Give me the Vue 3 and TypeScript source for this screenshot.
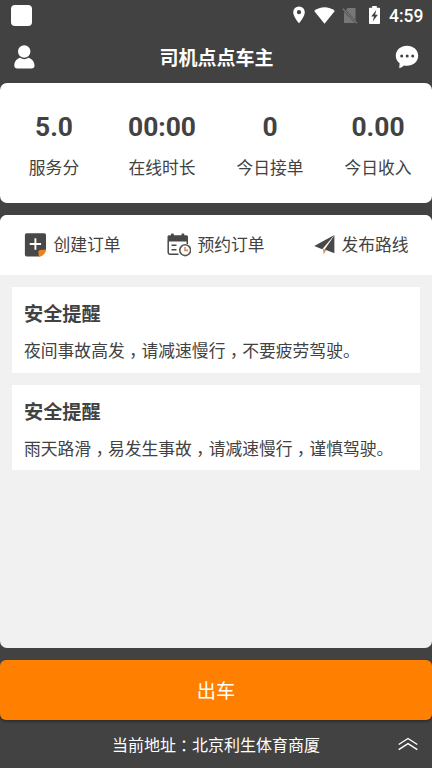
<script setup lang="ts">
interface Stat {
  value: string
  label: string
}

interface Notice {
  title: string
  parts: string[]
}

const stats: Stat[] = [
  { value: '5.0', label: '服务分' },
  { value: '00:00', label: '在线时长' },
  { value: '0', label: '今日接单' },
  { value: '0.00', label: '今日收入' },
]

const notices: Notice[] = [
  { title: '安全提醒', parts: ['夜间事故高发', '请减速慢行', '不要疲劳驾驶。'] },
  { title: '安全提醒', parts: ['雨天路滑', '易发生事故', '请减速慢行', '谨慎驾驶。'] },
]
</script>

<template>
  <div class="screen">
    <div class="status">
      <span class="app-dot"></span>
      <div class="status-right">
        <svg class="pin" viewBox="0 0 12 18" width="12" height="18">
          <path fill="#fff" fill-rule="evenodd" d="M6 .4A5.800 5.800 0 0 0 .2 6.200C.2 10.500 6 17.300 6 17.300S11.800 10.500 11.800 6.200A5.800 5.800 0 0 0 6 .4ZM6 4.100a2.100 2.100 0 1 1 0 4.200a2.100 2.100 0 0 1 0-4.200Z" />
        </svg>
        <svg class="wifi" viewBox="0 0 21 17" width="21" height="17">
          <path fill="#fff" d="M.2 4.100C6-.9 15-.9 20.800 4.100L10.500 16.800Z" />
        </svg>
        <svg class="sim" viewBox="0 0 16 17" width="16" height="17">
          <path fill="#777" d="M5.500 1H13.500V13.200L3.900 3.200ZM2 4.800L13 16H2Z" />
          <path stroke="#777" stroke-width="1.300" fill="none" d="M.8 1.800L15 16.200" />
        </svg>
        <svg class="battery" viewBox="0 0 11 18" width="11" height="18">
          <path fill="#fff" d="M3.200 0H7.800V1.800H10.200Q11 1.800 11 2.600V17.200Q11 18 10.200 18H.8Q0 18 0 17.200V2.600Q0 1.800 .8 1.800H3.200Z" />
          <path fill="#424242" d="M7.300 4L2.200 10.500H5L3.700 15.500L8.900 8.700H6.100Z" />
        </svg>
        <span class="clock">4:59</span>
      </div>
    </div>

    <header class="header">
      <svg viewBox="0 0 22 24" width="22" height="24">
        <circle cx="10.200" cy="6.500" r="6.200" fill="#fff" />
        <path fill="#fff" d="M6 12.700Q10.200 15.600 14.500 12.700C18.200 13.600 20.500 17.200 20.500 20.500Q20.500 23.500 17.500 23.500H3.300Q.3 23.500 .3 20.500C.3 17.200 2.400 13.600 6 12.700Z" />
      </svg>
      <h1>司机点点车主</h1>
      <svg viewBox="0 0 24 24" width="24" height="24">
        <path fill="#fff" d="M12 .7C18.300 .7 23.200 5 23.200 10.700S18.300 20.700 12 20.700Q10.400 20.700 9 20.400Q6.700 22.700 4.300 23.200L4.600 18.200C2.200 16.300 .8 13.700 .8 10.700C.8 5 5.700 .7 12 .7Z" />
        <g fill="#424242">
          <circle cx="6.700" cy="10.900" r="1.500" />
          <circle cx="12.200" cy="10.900" r="1.500" />
          <circle cx="17.700" cy="10.900" r="1.500" />
        </g>
      </svg>
    </header>

    <section class="stats">
      <div v-for="stat in stats" :key="stat.label" class="stat">
        <strong>{{ stat.value }}</strong>
        <span>{{ stat.label }}</span>
      </div>
    </section>

    <main class="panel">
      <nav class="actions">
        <button class="action">
          <svg viewBox="0 0 24 24" width="24" height="24">
            <path fill="#484848" d="M3.700 .3H21.200Q23 .3 23 2.100V17L16.500 23.500H3.700Q1.900 23.500 1.900 21.700V2.100Q1.900 .3 3.700 .3Z" />
            <path fill="none" stroke="#fff" stroke-width="1.900" d="M12.400 5.300V16.700M6.700 11H18.100" />
            <path fill="#e9821f" d="M23 16.600C22.900 20.200 20.200 23.300 15.900 23.700L15.300 18.700Q15.500 17 17.300 17Z" />
          </svg>
          <span>创建订单</span>
        </button>
        <button class="action">
          <svg viewBox="0 0 24 24" width="24" height="24">
            <path fill="#484848" d="M2 2.300H4V1.200Q4 .4 4.800 .4H6Q6.800 .4 6.800 1.200V2.300H14.500V1.200Q14.500 .4 15.300 .4H16.500Q17.300 .4 17.300 1.200V2.300H19.500Q21 2.300 21 3.800V8.500H.5V3.800Q.5 2.300 2 2.300Z" />
            <path fill="none" stroke="#484848" stroke-width="1.500" d="M1.200 8V19.500Q1.200 21.200 2.900 21.200H11.500M20.300 8V11" />
            <path stroke="#484848" stroke-width="1.600" d="M4.500 12.200H9.500M4.500 16.700H9.500" />
            <circle cx="18.200" cy="17.200" r="5.400" fill="#fff" stroke="#555" stroke-width="1.600" />
            <path fill="none" stroke="#e08a50" stroke-width="1.600" d="M18 13.900V17.400H21" />
          </svg>
          <span>预约订单</span>
        </button>
        <button class="action">
          <svg viewBox="0 0 24 24" width="24" height="24">
            <path fill="#484848" d="M23.400 2L3.200 12.900L11.200 16.200Z" />
            <path fill="#484848" d="M23.400 2.300L13.700 16.600L23.400 20.300Z" />
            <path fill="#e9924d" d="M11.900 15.500L15.200 17.300L12.600 21.400Z" />
          </svg>
          <span>发布路线</span>
        </button>
      </nav>

      <div class="notices">
        <article v-for="(notice, n) in notices" :key="n" class="notice">
          <h2>{{ notice.title }}</h2>
          <p><template v-for="(part, i) in notice.parts" :key="i"><span v-if="i > 0" class="mark comma">，</span>{{ part }}</template></p>
        </article>
      </div>
    </main>

    <button class="go">出车</button>

    <footer class="address">
      <p>当前地址<span class="mark colon">：</span>北京利生体育商厦</p>
      <svg viewBox="0 0 20 14" width="20" height="14">
        <path fill="none" stroke="#fff" stroke-width="1.400" d="M.7 7.500L10 1.500L19.300 7.500M.7 12.700L10 6.700L19.300 12.700" />
      </svg>
    </footer>
  </div>
</template>

<style>
body {
  margin: 0;
  background: #424242;
}
</style>

<style scoped>
.screen {
  display: flex;
  flex-direction: column;
  width: 432px;
  height: 768px;
  overflow: hidden;
  background: #424242;
  color: #424242;
  font-family: Roboto, 'Noto Sans CJK SC', sans-serif;
}

h1,
h2,
p {
  margin: 0;
}

button {
  margin: 0;
  padding: 0;
  border: 0;
  font: inherit;
  color: inherit;
}

svg {
  display: block;
  flex: none;
}

.status {
  display: flex;
  justify-content: space-between;
  align-items: center;
  box-sizing: border-box;
  height: 30px;
  padding: 0 9px 0 11px;
}

.app-dot {
  width: 21px;
  height: 21px;
  border-radius: 4px;
  background: #fff;
}

.status-right {
  display: flex;
  align-items: center;
}

.wifi {
  margin-left: 9px;
}

.sim {
  margin-left: 7px;
}

.battery {
  margin-left: 11px;
}

.clock {
  width: 34px;
  margin-left: 9px;
  padding-top: 2px;
  color: #fff;
  font-size: 17.5px;
  font-weight: 500;
  line-height: 20px;
}

.header {
  display: flex;
  align-items: center;
  justify-content: space-between;
  box-sizing: border-box;
  height: 53px;
  padding: 0 13px 0 14px;
  color: #fff;
}

.header h1 {
  padding: 4px 0 0 2px;
  font-size: 19px;
  font-weight: 700;
  line-height: 28px;
}

.stats {
  display: grid;
  grid-template-columns: repeat(4, 1fr);
  box-sizing: border-box;
  height: 120px;
  padding-top: 28px;
  border-radius: 7px;
  background: #fff;
}

.stat {
  display: flex;
  flex-direction: column;
  align-items: center;
  gap: 13px;
}

.stat strong {
  font-size: 26.4px;
  line-height: 32px;
}

.stat span {
  font-size: 16.8px;
  line-height: 24px;
}

.panel {
  height: 433px;
  margin-top: 12px;
  overflow: hidden;
  border-radius: 7px;
  background: #f1f1f1;
}

.actions {
  display: grid;
  grid-template-columns: repeat(3, 1fr);
  height: 60px;
  background: #fff;
}

.action {
  display: flex;
  align-items: center;
  justify-content: center;
  gap: 6px;
  background: none;
  font-size: 16.8px;
  line-height: 24px;
}

.notices {
  display: flex;
  flex-direction: column;
  gap: 12px;
  padding: 12px;
}

.notice {
  box-sizing: border-box;
  height: 85.6px;
  padding: 14px 12px 0;
  background: #fff;
}

.notice h2 {
  font-size: 19.2px;
  font-weight: 700;
  line-height: 28px;
}

.notice p {
  margin-top: 10px;
  font-size: 16.8px;
  line-height: 24px;
  white-space: nowrap;
}

.mark {
  font-family: 'Noto Sans CJK TC', sans-serif;
  line-height: 1;
}

.comma {
  vertical-align: -5px;
}

.colon {
  vertical-align: -1px;
}

.go {
  flex: none;
  height: 60px;
  margin-top: 12px;
  border-radius: 6px;
  background: #ff8000;
  box-shadow: 0 2px 3px rgba(0, 0, 0, 0.3);
  color: #fff;
  font-size: 19.2px;
}

.address {
  display: grid;
  grid-template-columns: 1fr auto 1fr;
  align-items: center;
  height: 48px;
  color: #fff;
}

.address p {
  grid-column: 2;
  padding-top: 4px;
  font-size: 16px;
  line-height: 24px;
}

.address svg {
  justify-self: end;
  margin-right: 14px;
}
</style>
